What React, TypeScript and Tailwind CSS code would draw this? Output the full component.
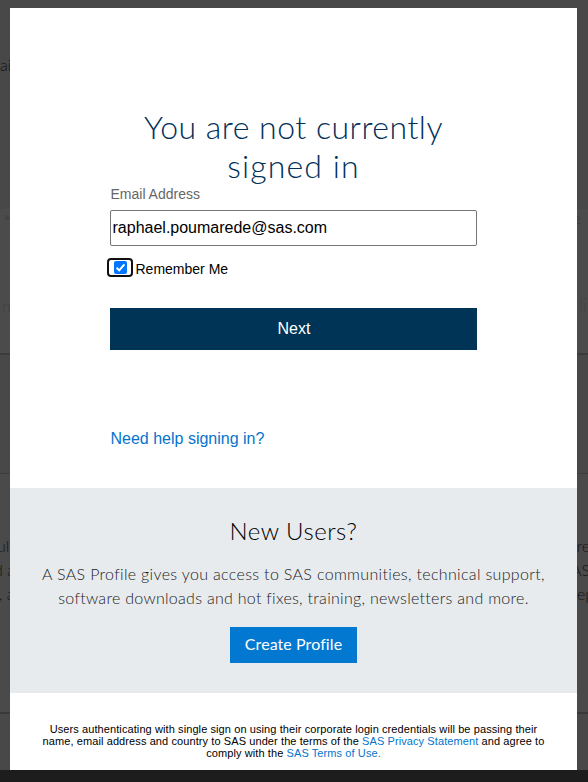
import React from "react";

type StripLine = { text: string; className: string };

function Gutter({ side, lines }: { side: "left" | "right"; lines: StripLine[] }) {
  return (
    <div
      className={
        side === "left"
          ? "relative h-full w-[10px] overflow-hidden"
          : "relative h-full w-[11px] overflow-hidden"
      }
    >
      {lines.map((l) => (
        <span key={l.text} className={`absolute whitespace-nowrap ${l.className}`}>
          {l.text}
        </span>
      ))}
    </div>
  );
}

function Backdrop() {
  return (
    <div className="absolute inset-0 flex flex-col bg-[#4a4a4a] font-['Lato',sans-serif] font-light text-[#151515]">
      <div className="flex h-[209px] justify-between bg-[#484848]">
        <Gutter
          side="left"
          lines={[{ text: "ai", className: "left-0 top-[55px] text-[16px] leading-[20px] text-[#101010]" }]}
        />
      </div>
      <div className="flex h-[146px] justify-between border-b-2 border-[#3b3b3b] bg-[#4b4b4b]">
        <Gutter
          side="left"
          lines={[
            { text: "▲", className: "left-[2px] top-[1px] text-[10px] leading-[12px] text-[#434347]" },
            { text: "n", className: "left-[2px] top-[87px] text-[16px] leading-[20px] text-[#404040]" },
          ]}
        />
        <Gutter
          side="right"
          lines={[
            { text: "e", className: "left-[-4px] top-0 text-[15px] leading-[18px] text-[#3a3a3a]" },
            { text: "li", className: "left-[2px] top-[86px] text-[17px] leading-[20px] text-[#3e4244]" },
          ]}
        />
      </div>
      <div className="h-[119px] border-b border-[#3d3d3d] bg-[#484848]" />
      <div className="flex h-[240px] justify-between border-b-2 border-[#393939]">
        <Gutter
          side="left"
          lines={[
            { text: "ul", className: "left-[-3px] top-[62px] text-[16px] leading-[20px]" },
            { text: "d a", className: "left-[-6px] top-[86px] text-[16px] leading-[20px]" },
            { text: ", a", className: "left-[-1px] top-[110px] text-[16px] leading-[20px]" },
          ]}
        />
        <Gutter
          side="right"
          lines={[
            { text: "cre", className: "left-[-8px] top-[62px] text-[16px] leading-[20px]" },
            { text: "AS", className: "left-[-6px] top-[86px] text-[16px] leading-[20px]" },
            { text: "ep", className: "left-0 top-[110px] text-[16px] leading-[20px]" },
          ]}
        />
      </div>
      <div className="h-[56px] bg-[#484848]" />
      <div className="h-[12px] bg-[#1d1d1d]" />
    </div>
  );
}

function SignInForm() {
  return (
    <form
      className="flex h-[480px] flex-col px-[100px] pt-[99px] text-[#000]"
      onSubmit={(e) => e.preventDefault()}
    >
      <h1 className="text-center font-['Lato',sans-serif] text-[32px] leading-[39px] font-light whitespace-nowrap text-[#00305a]">
        <span className="block tracking-[0.5px]">You are not currently</span>
        <span className="block tracking-[1.1px]">signed in</span>
      </h1>
      <label htmlFor="email" className="mt-[-1px] h-[26px] pl-[0.5px] text-[14px] leading-[20px] text-[#666]">
        Email Address
      </label>
      <input
        id="email"
        type="text"
        defaultValue="raphael.poumarede@sas.com"
        className="h-[36px] w-[367px] rounded-[2px] border border-[#767676] bg-white px-[1.5px] pb-px text-[16px] text-black"
      />
      <div className="mt-3 ml-[-3px] flex h-[19px] items-center">
        <span className="flex h-[19px] w-[26px] items-center justify-center rounded-[4px] border-2 border-[#101010]">
          <svg viewBox="0 0 13 13" className="h-[13px] w-[13px]">
            <rect width="13" height="13" rx="2" fill="#0075ff" />
            <path d="M2.6 6.8 5.2 9.4 10.4 3.3" fill="none" stroke="#fff" strokeWidth="2" />
          </svg>
        </span>
        <span className="pt-[2px] pl-[2.5px] text-[14px] leading-[18px]">Remember Me</span>
      </div>
      <button className="mt-[31px] h-[42px] w-[367px] bg-[#003457] pl-px text-[16px] leading-[20px] text-white">
        Next
      </button>
      <a className="mt-[79px] pl-[0.5px] text-[16px] leading-[20px] text-[#0474cc]">Need help signing in?</a>
    </form>
  );
}

function NewUsers() {
  return (
    <section className="flex h-[205px] flex-col items-center bg-[#e7ebee] font-['Lato',sans-serif] font-light whitespace-nowrap">
      <h2 className="mt-[28px] text-[24px] leading-[30px] tracking-[0.5px] text-black">New Users?</h2>
      <p className="mt-4 flex flex-col items-center text-[16px] leading-[24px] text-[#1c1c1c]">
        <span className="tracking-[0.33px]">
          A SAS Profile gives you access to SAS communities, technical support,
        </span>
        <span className="tracking-[0.29px]">
          software downloads and hot fixes, training, newsletters and more.
        </span>
      </p>
      <button className="mt-[17px] h-[36px] w-[127px] bg-[#0378d1] pb-[2px] text-[16px] leading-[20px] font-normal tracking-[0.08px] text-white">
        Create Profile
      </button>
    </section>
  );
}

function Terms() {
  return (
    <p className="pt-[30px] text-center text-[11px] leading-[12px] tracking-[0.093px] whitespace-nowrap text-black">
      Users authenticating with single sign on using their corporate login credentials will be passing their
      <br />
      name, email address and country to SAS under the terms of the{" "}
      <a className="text-[#0474cc]">SAS Privacy Statement</a> and agree to
      <br />
      comply with the <a className="text-[#0474cc]">SAS Terms of Use.</a>
    </p>
  );
}

export default function App() {
  return (
    <div className="relative h-[782px] w-[588px] overflow-hidden pt-2 pl-[10px] font-['Liberation_Sans',Arial,sans-serif]">
      <Backdrop />
      <main className="relative h-[762px] w-[567px] bg-white">
        <SignInForm />
        <NewUsers />
        <Terms />
      </main>
    </div>
  );
}
